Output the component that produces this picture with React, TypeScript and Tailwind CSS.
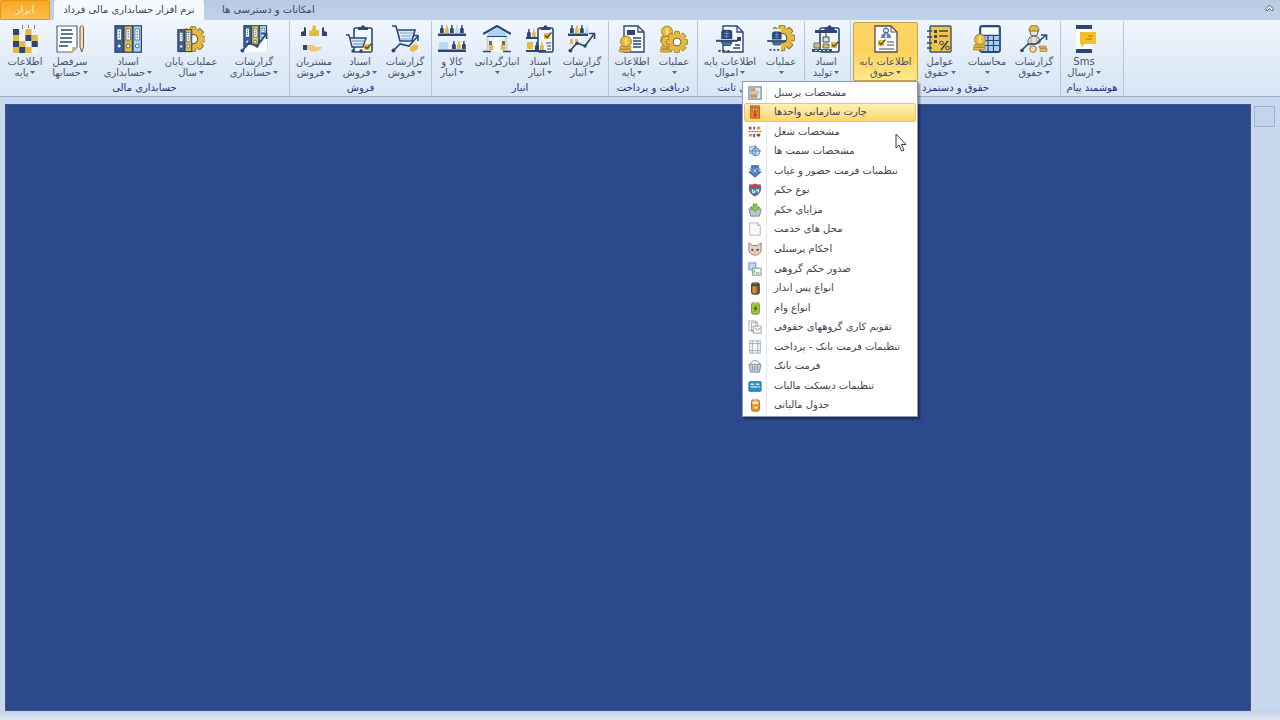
import React from "react";
import clsx from "clsx";

const NAVY = "#2b4676";
const GOLD = "#e6b93f";
const SKY = "#a9d4f2";
const PALE = "#dcebf8";

/* ---------- shared pieces of the 28x28 ribbon icons ---------- */

const Icon: React.FC<{ children: React.ReactNode }> = ({ children }) => (
  <svg width="28" height="28" viewBox="0 0 28 28" fill="none" className="shrink-0" aria-hidden="true">
    {children}
  </svg>
);

const Gear = ({ x = 14, y = 14, s = 1, hole = "#fff" }) => (
  <g transform={`translate(${x} ${y}) scale(${s})`}>
    {[0, 45, 90, 135].map((a) => (
      <rect key={a} x="-3" y="-13" width="6" height="26" rx="1" fill={GOLD} stroke="#8a6d2c" strokeWidth="1" transform={`rotate(${a})`} />
    ))}
    <circle r="10" fill={GOLD} />
    <circle r="4.8" fill={hole} stroke="#6b5a3a" strokeWidth="1.2" />
  </g>
);

const Binders = ({ n = 3 }) => (
  <g>
    {[0, 1, 2].slice(0, n).map((i) => (
      <g key={i}>
        <rect x={1 + i * 9} y="0.8" width="8.4" height="26.4" fill={i === 0 ? "#41608f" : i === 1 ? GOLD : SKY} stroke={NAVY} strokeWidth="1.3" />
        <rect x={3 + i * 9} y="4" width="4.4" height="11" fill="#f4f8fc" stroke={NAVY} strokeWidth="0.6" />
        <path d={`M${5.2 + i * 9} 6v7`} stroke={NAVY} strokeDasharray="1.4 1.2" />
        <circle cx={5.2 + i * 9} cy="21" r="1.9" fill="#fff" stroke={NAVY} strokeWidth="0.8" />
      </g>
    ))}
  </g>
);

const Trend = () => (
  <g>
    <path d="M2 26 9 18l8 3L26 9" stroke={NAVY} strokeWidth="1.6" />
    <path d="M21 8.5h5.6V14" stroke={NAVY} strokeWidth="1.6" />
    <circle cx="2.4" cy="25.6" r="1.9" fill={NAVY} />
    <circle cx="9" cy="18.3" r="1.7" fill={NAVY} />
    <circle cx="17" cy="21" r="1.7" fill={NAVY} />
  </g>
);

const Bottles = ({ x = 0, y = 0, n = 5 }) => (
  <g transform={`translate(${x} ${y})`}>
    {[NAVY, GOLD, NAVY, "#c3d8ec", NAVY].slice(0, n).map((c, i) => (
      <path key={i} d={`M${1 + i * 5} 8V4l1.2-1.6V0h1.4v2.4L${4.8 + i * 5} 4v4z`} fill={c} />
    ))}
  </g>
);

const Clipboard = ({ x = 8, w = 19 }) => (
  <g>
    <rect x={x} y="3" width={w} height="24" rx="1.5" fill="#f3f8fd" stroke={NAVY} strokeWidth="1.6" />
    <path d={`M${x + w / 2 - 5} 5V2.2h3a2 2 0 0 1 4 0h3V5z`} fill={NAVY} />
  </g>
);

const Tick = ({ x = 18, y = 14 }) => (
  <g transform={`translate(${x} ${y})`}>
    <rect width="6" height="6" fill={GOLD} />
    <path d="m1 2.5 2 2L7.5-.5" stroke="#5a4a26" strokeWidth="1.3" />
  </g>
);

const Sheet = ({ x = 5 }) => (
  <g>
    <path d={`M${x} 1h14l6 6v20H${x}z`} fill="#f8fbfe" stroke={NAVY} strokeWidth="1.4" />
    <path d={`M${x + 14} 1v6h6`} stroke={NAVY} strokeWidth="1.3" />
  </g>
);

const Coins = ({ x = 1, y = 16 }) => (
  <g transform={`translate(${x} ${y})`} fill={GOLD} stroke="#9a7628" strokeWidth="0.8">
    <rect y="8" width="12" height="3" rx="1.5" />
    <rect x="1" y="5" width="11" height="3" rx="1.5" />
    <circle cx="7" cy="0.5" r="5.5" />
    <path d="M8.5-1.5c-3-1-3.5 1.6-1.5 2s2 2.6-1.5 1.7M7-3v7" stroke="#fff0b8" fill="none" />
  </g>
);

// hard hat over a crossbar, with three dots below
const Helmet = () => (
  <g>
    <path d="M10 13V6q0-3 3-3h6q3 0 3 3v7z" fill={NAVY} />
    <path d="M13 7h6M13 10h6M16 4v8" stroke="#7ea6d4" strokeWidth="0.8" />
    <path d="M4 15h24" stroke={NAVY} strokeWidth="2.2" />
    <path d="M10 16h12l-2 4h-8z" fill="#49719f" stroke={NAVY} />
    <path d="M7 26h14" stroke={NAVY} strokeWidth="2.2" strokeDasharray="2.4 2.4" />
  </g>
);

const checker: [number, number, string][] = [
  [0, 0, NAVY], [2, 0, GOLD],
  [0, 1, GOLD], [2, 1, NAVY], [3, 1, GOLD],
  [0, 2, NAVY], [1, 2, GOLD], [3, 2, NAVY],
  [0, 3, GOLD], [1, 3, NAVY], [2, 3, GOLD],
];

const icons: Record<string, React.ReactNode> = {
  base: (
    <>
      <rect x="2" y="4" width="25" height="24" fill="#f1f4f6" />
      {checker.map(([col, row, color], i) => (
        <rect key={i} x={2 + col * 6.2} y={4 + row * 6} width="6.2" height="6" fill={color} />
      ))}
      <path d="M11.500 0v4M17.500 0v3M23.500 0v4" stroke="#76869f" />
    </>
  ),
  ledger: (
    <>
      <path d="M1 1h20v21l-5 5H1z" fill="#fdfefe" stroke="#5a677e" strokeWidth="1.2" />
      <path d="M5 5h11M5 9h12M4 13h12M4 17h12M3 21h9" stroke={NAVY} strokeWidth="1.5" />
      <path d="M16 27v-5h5z" fill={GOLD} />
      <path d="M24 3c0-3 3.500-3 3.500 0v19l-1.700 5-1.800-5z" fill="#f5dfb6" stroke="#6f5a49" />
    </>
  ),
  binders: <Binders />,
  yearEnd: (
    <>
      <Gear x={16} y={14} s={0.95} />
      <rect x="0" y="4" width="15" height="23" fill="#e7f0fa" />
      <g transform="translate(0 4) scale(.8 .83)">
        <Binders n={2} />
      </g>
    </>
  ),
  bindersReport: (
    <>
      <g transform="translate(3 0) scale(.86 .8)">
        <Binders />
      </g>
      <path d="m2 27 7-8 8 3 10-11v16z" fill="#f8fbfe" />
      <Trend />
    </>
  ),
  customers: (
    <>
      <path d="M1 11V7l3-1V2l2 1v8zM22 11V3l2-1v4l3 1v4z" fill={NAVY} />
      <path d="M9 11V6l3-1 1-5 3 1v4h3v6z" fill={GOLD} />
      <path d="M3 20h4v5H3z" fill={NAVY} />
      <path d="M7 20q7-1 8 2h7q-3 6-12 4l-3-2z" fill="#f0c680" />
    </>
  ),
  salesDocs: (
    <>
      <Clipboard x={8} w={18} />
      <path d="M0 10h3l3 12h11l3-9H4" fill={PALE} stroke={NAVY} strokeWidth="1.4" />
      <path d="M6 16h12M7 19h10" stroke="#5f8abb" />
      <circle cx="7" cy="26" r="1.7" fill={NAVY} />
      <circle cx="15" cy="26" r="1.7" fill={NAVY} />
      <Tick x={18} y={19} />
    </>
  ),
  salesReport: (
    <>
      <path d="M1 1h4l4 15h12L24 5H7" stroke={NAVY} strokeWidth="1.6" fill={PALE} />
      <path d="M9 8h13M10 11h11M10 14h11" stroke="#7fa6cf" strokeWidth="1.2" />
      <path d="m2 26 7-7 9 2 9-10" stroke={NAVY} strokeWidth="1.6" />
      <path d="M22 10.500h5V16" stroke={NAVY} strokeWidth="1.500" />
      <circle cx="2.500" cy="25.500" r="2" fill={NAVY} />
      <ellipse cx="23" cy="23" rx="4.500" ry="3" fill={GOLD} transform="rotate(-30 23 23)" />
    </>
  ),
  goods: (
    <>
      <Bottles x={1} />
      <path d="M0 8.500h28v2.500H0zM0 24.500h28V27H0z" fill={NAVY} />
      <rect x="1" y="17" width="9" height="7" fill="#b9dcf3" />
      <Bottles x={13} y={16} n={3} />
    </>
  ),
  warehouse: (
    <>
      <path d="M5 8 14 3l9 5v4H5z" fill={SKY} />
      <path d="M0 9 14 1l14 8" stroke={NAVY} strokeWidth="2.200" />
      <path d="M4 11.500h20" stroke={NAVY} />
      <path d="M4.500 12v14M23.500 12v14" stroke="#c6d2e0" strokeWidth="2" />
      <path d="M0 26.500h8M20 26.500h8" stroke={NAVY} strokeWidth="1.500" />
      <path d="M6 16h3v4H6zM19 16h3v4h-3z" fill="#6b6a58" />
      <path d="M6 20h4v5H6zM18 20h4v5h-4z" fill={GOLD} />
      <path d="M11 13h6v13h-6z" fill="#fdfdfd" />
    </>
  ),
  stockDocs: (
    <>
      <Clipboard x={12} w={15} />
      <Bottles x={0} y={4} n={2} />
      <path d="M0 12h12v2H0zM0 25h20v2H0z" fill={NAVY} />
      <rect x="1" y="17" width="6" height="7" fill={GOLD} />
      <Bottles x={8} y={17} n={2} />
      <Tick x={18} y={8} />
      <path d="M20 18h5M21 21h4M21 24h4" stroke={NAVY} />
    </>
  ),
  stockReport: (
    <>
      <Bottles x={1} n={4} />
      <path d="M0 8.500h20V11H0z" fill={NAVY} />
      <path d="M2 14h3v5H2zM7 14h3v3H7z" fill={GOLD} />
      <Trend />
    </>
  ),
  receiptBase: (
    <>
      <Sheet x={6} />
      <path d="M9 5h8v5H9z" fill={NAVY} />
      <path d="M15 13h8M15 16h8M15 19h8M15 22h8" stroke={NAVY} strokeWidth="1.400" />
      <Coins x={1} y={16} />
    </>
  ),
  coinsGear: (
    <>
      <Coins x={0} y={6} />
      <Coins x={0} y={16} />
      <Gear x={17} y={17} s={0.82} />
    </>
  ),
  assetBase: (
    <>
      <Sheet x={7} />
      <path d="M21 12h4v4h-4z" fill={NAVY} />
      <path d="M19 20h5M17 23h7" stroke={NAVY} strokeWidth="1.400" />
      <path d="M5 5h14v15H5z" fill="#f4f8fc" />
      <g transform="translate(-4 2) scale(.92)">
        <Helmet />
      </g>
    </>
  ),
  assetOps: (
    <>
      <Gear x={15} y={13} s={0.98} />
      <path d="M0 4h14v24H0z" fill="#e7f0fa" />
      <g transform="translate(-3 4) scale(.8)">
        <Helmet />
      </g>
    </>
  ),
  production: (
    <>
      <Clipboard x={8} w={19} />
      <path d="M3 5h22v3H3z" fill={NAVY} />
      <path d="M14 8v4M11 12h6v5h-6z" stroke={NAVY} fill="#f4e2b8" />
      <path d="M2 18h6v5H2zM11 19h6v4h-6z" fill="#d9b978" stroke="#5a5440" strokeWidth="0.8" />
      <path d="M0 24h20v3H0z" fill="#3a5a62" />
      <path d="M3 25.500h14" stroke="#c8d9ea" strokeDasharray="2 2" />
      <Tick x={19} y={17} />
    </>
  ),
  payrollBase: (
    <>
      <path d="M3 1h16l6 6v20H3z" fill="#fffdf6" stroke="#4b4f5c" strokeWidth="1.300" />
      <path d="M19 1v6h6" stroke="#4b4f5c" />
      <circle cx="14" cy="5.500" r="2.500" fill={PALE} stroke={NAVY} />
      <path d="M9 13q0-5 5-5t5 5z" fill="#6485b0" />
      <path d="m14 8-1 4 1 1 1-1z" fill="#fff" />
      <Tick x={6} y={15} />
      <path d="M15 17h7M15 20h7M7 24h15" stroke="#4b4f5c" strokeWidth="1.200" />
    </>
  ),
  factors: (
    <>
      <rect x="4" y="1" width="21" height="26" rx="1" fill="#efc64d" stroke="#4a5064" strokeWidth="1.400" />
      <path d="M1 6h5M1 12h5M1 18h5M1 23h5" stroke={NAVY} strokeWidth="1.600" />
      <path d="M13 6h9M13 11h9" stroke="#4a4a48" strokeWidth="1.400" />
      <path d="M8 5h3v3H8zM8 10h3v3H8zM8 15h3v3H8z" fill="#4a4a48" />
      <path d="m22 16-7 9" stroke="#3a3f4e" strokeWidth="1.600" />
      <circle cx="15.500" cy="18" r="1.800" stroke="#3a3f4e" />
      <circle cx="21.500" cy="23" r="1.800" stroke="#3a3f4e" />
    </>
  ),
  calculator: (
    <>
      <rect x="7" y="1" width="20" height="26" rx="2" fill="#a9cdf0" stroke={NAVY} strokeWidth="1.800" />
      <rect x="9" y="3" width="16" height="6" fill="#fff" />
      <path d="M8 10.500h18M8 15.500h18M8 20.500h18M15 10v16M20.500 10v16" stroke={NAVY} strokeWidth="1.200" />
      <Coins x={0} y={14} />
    </>
  ),
  payrollReport: (
    <>
      <circle cx="14" cy="7" r="4" fill="#fbe3bf" stroke={NAVY} strokeWidth="0.8" />
      <path d="M9 6q0-6 5-6t5 6z" fill={GOLD} stroke="#6b5a3a" strokeWidth="0.8" />
      <path d="M8 20v-5q1-4 6-4t6 4v3z" fill="#cfe3f6" stroke={NAVY} strokeWidth="0.8" />
      <path d="M11 12v7M17 12v7" stroke={GOLD} strokeWidth="1.500" />
      <path d="m1 26 7-7h8L26 10M21 10h5.500v5" stroke={NAVY} strokeWidth="1.600" />
      <circle cx="2" cy="25.500" r="1.800" fill={NAVY} />
      <circle cx="13" cy="24" r="3.300" fill="#f6d998" stroke="#9a7628" />
      <path d="M19 21h7v2h-7zM20 23.500h7v3h-7z" fill={GOLD} stroke="#9a7628" strokeWidth="0.6" />
    </>
  ),
  sms: (
    <>
      <rect x="6" y="1" width="16" height="26" rx="1" fill="#fff" />
      <path d="M6 0h16v4H6zM6 24h16v4H6z" fill={NAVY} />
      <path d="M10 7h16v12H15l-4 3v-3h-1z" fill="#f3bf2c" />
      <path d="M18 11h5M16 14h6" stroke="#c78f14" strokeWidth="1.300" />
    </>
  ),
};

/* ---------- 16x16 menu icons ---------- */

const menuIcons: Record<string, React.ReactNode> = {
  person: (
    <>
      <rect x="1" y="1" width="14" height="14" fill="#dceaf5" stroke="#6f8294" strokeWidth="1.3" />
      <path d="M3 3h5v2H3zM3 10h7v3H3z" fill="#dd9a4a" stroke="#81756a" strokeWidth=".5" />
      <path d="M3 6h9v3H3z" fill="#f0c886" stroke="#81939d" strokeWidth=".5" />
    </>
  ),
  chart: (
    <>
      <rect x="3" y="1" width="10" height="14" fill="#ee8038" stroke="#c04c16" />
      <path d="M5 3h2v4H5zM9 3h2v4H9z" fill="#ffe2a6" stroke="#8a2806" strokeWidth=".6" />
      <path d="M8 7v6M6 11l2 2 2-2" stroke="#8a2806" />
    </>
  ),
  job: (
    <>
      <path d="M1 2h3v3H1zM6 2h2v3H6zM10 10h4v3h-4z" fill="#b1413f" />
      <path d="M10 2h4v3h-4zM1 10h4v3H1z" fill="#d9a138" />
      <path d="M1 7.500h14" stroke="#444" strokeDasharray="2 1" />
      <path d="M6 10h2v4H6z" fill="#6a5280" />
    </>
  ),
  position: (
    <>
      <path d="M2 3h8v8H2z" fill="#cfe2f5" stroke="#6a98c8" />
      <circle cx="9" cy="9" r="4.500" fill="#b9d5f0" fillOpacity=".7" stroke="#4d7fb8" />
      <path d="M8 1v13M1 8h14" stroke="#4d7fb8" />
    </>
  ),
  attendance: (
    <>
      <path d="m8 15-7-6h3V2h8v7h3z" fill="#4b7fc2" stroke="#315c9b" />
      <path d="m1 6 3-3v6zM15 6l-3-3v6z" fill="#8eb8e4" />
      <path d="m6 6 4 4M10 5 6 10" stroke="#dcebfb" />
    </>
  ),
  shield: (
    <>
      <path d="M2 2q3 1 6-1 3 2 6 1 3 9-6 13Q-1 11 2 2z" fill="#3d7cab" stroke="#7b6a78" />
      <path d="M2 2q3 1 6-1 3 2 6 1l.5 3h-13z" fill="#cf4038" />
      <path d="M5 7v4h3V9H5M10 7v2h2M12 7v4" stroke="#fff" />
    </>
  ),
  benefits: (
    <>
      <path d="M1 7h14l-2 8H3z" fill="#b8c7d2" stroke="#72818d" />
      <path d="m2 7 3-4M14 7l-3-4" stroke="#72818d" />
      <path d="M6 1h4v4h3L8 10 3 5h3z" fill="#8dc63f" stroke="#4e8a20" strokeWidth=".7" />
    </>
  ),
  page: <path d="M2 1h9l3 3v11H2zM11 1v3h3" fill="#fafafa" stroke="#b0b0b0" />,
  cat: (
    <>
      <path d="M1 1l4 3h6l4-3v9q-2 5-7 5t-7-5z" fill="#e6d2c4" stroke="#8e7364" />
      <circle cx="5" cy="9" r="1.3" fill="#57443b" />
      <circle cx="11" cy="9" r="1.3" fill="#57443b" />
      <path d="M7 11h2l-1 1z" fill="#b3564f" />
    </>
  ),
  group: (
    <>
      <path d="M1 1h8v8H1z" fill="#b9d8f2" stroke="#5d89b5" />
      <path d="M5 7h10v8H5z" fill="#f1f6ee" stroke="#6d8c86" />
      <path d="M7 9v4M9 12.500h4" stroke="#4f8a5c" />
    </>
  ),
  saving: (
    <>
      <rect x="4" y="2" width="9" height="13" rx="2" fill="#4f4a45" stroke="#4a4038" />
      <path d="M6 1h5v2H6z" fill="#9b948a" />
      <path d="M5 6h4v8H5z" fill="#e58a2a" />
      <path d="M9 6h2v8H9z" fill="#b56a24" />
    </>
  ),
  loan: (
    <>
      <rect x="4" y="2" width="9" height="13" rx="2" fill="#a2c83a" stroke="#71862f" />
      <path d="M6 1h5v2H6z" fill="#c5c9b3" />
      <path d="M9 5 6 9h2l-1 4 4-5H9l1-3z" fill="#48661b" />
    </>
  ),
  calendar: (
    <>
      <path d="M1 1h8v11H1zM4 3h7v10H4z" fill="#f7f8fa" stroke="#a0a6ae" />
      <path d="M6 7h9v8H6z" fill="#fff" stroke="#8b929c" />
      <path d="m8 9 3 3 3-3" stroke="#777" />
    </>
  ),
  grid: (
    <>
      <rect x="2" y="1" width="12" height="14" fill="#f5f9fb" stroke="#9aabb6" />
      <path d="M5 1v14M11 1v14M2 4h12M2 12h12" stroke="#9aabb6" />
    </>
  ),
  basket: (
    <>
      <path d="M1 6h14l-2 9H3z" fill="#c6d0dc" stroke="#76869a" />
      <path d="M3 6q0-4 5-4t5 4M5 8v5M8 8v5M11 8v5" stroke="#76869a" />
    </>
  ),
  disk: (
    <>
      <rect x="1" y="3" width="14" height="11" rx="1" fill="#2a92c9" stroke="#1c6c9b" />
      <path d="M3 6h4M3 9h8M9 6h4M12 9h2" stroke="#c9ecfb" strokeWidth="1.5" />
    </>
  ),
  taxTable: (
    <>
      <rect x="4" y="2" width="9" height="13" rx="2" fill="#f0932a" stroke="#a8601a" />
      <path d="M6 1h5v2H6z" fill="#c3c0b6" />
      <path d="M5 4h7v3H5z" fill="#f8e7c8" />
      <path d="M7 10h4v2H7z" fill="#fff3da" />
    </>
  ),
};

const menuItems = [
  { icon: "person", label: "مشخصات پرسنل" },
  { icon: "chart", label: "چارت سازمانی واحدها", active: true },
  { icon: "job", label: "مشخصات شغل" },
  { icon: "position", label: "مشخصات سمت ها" },
  { icon: "attendance", label: "تنظمیات فرمت حضور و غیاب" },
  { icon: "shield", label: "نوع حکم" },
  { icon: "benefits", label: "مزایای حکم" },
  { icon: "page", label: "محل های خدمت" },
  { icon: "cat", label: "احکام پرسنلی" },
  { icon: "group", label: "صدور حکم گروهی" },
  { icon: "saving", label: "انواع پس انداز" },
  { icon: "loan", label: "انواع وام" },
  { icon: "calendar", label: "تقویم کاری گروههای حقوقی" },
  { icon: "grid", label: "تنظیمات فرمت بانک - پرداخت" },
  { icon: "basket", label: "فرمت بانک" },
  { icon: "disk", label: "تنظیمات دیسکت مالیات" },
  { icon: "taxTable", label: "جدول مالیاتی" },
];

interface RibbonItem {
  icon: string;
  top: string;
  bottom?: string;
  width: string;
  open?: boolean;
}

interface RibbonGroup {
  title?: string;
  pad: string;
  items: RibbonItem[];
}

const groups: RibbonGroup[] = [
  {
    title: "حسابداری مالی",
    pad: "pl-[3px]",
    items: [
      { icon: "base", top: "اطلاعات", bottom: "پایه", width: "w-[44px]" },
      { icon: "ledger", top: "سرفصل", bottom: "حسابها", width: "w-[46px]" },
      { icon: "binders", top: "اسناد", bottom: "حسابداری", width: "w-[70px]" },
      { icon: "yearEnd", top: "عملیات پایان", bottom: "سال", width: "w-[56px]" },
      { icon: "bindersReport", top: "گزارشات", bottom: "حسابداری", width: "w-[70px]" },
    ],
  },
  {
    title: "فروش",
    pad: "pl-px pr-1",
    items: [
      { icon: "customers", top: "مشتریان", bottom: "فروش", width: "w-[46px]" },
      { icon: "salesDocs", top: "اسناد", bottom: "فروش", width: "w-[46px]" },
      { icon: "salesReport", top: "گزارشات", bottom: "فروش", width: "w-[44px]" },
    ],
  },
  {
    title: "انبار",
    pad: "pl-px pr-px",
    items: [
      { icon: "goods", top: "کالا و", bottom: "انبار", width: "w-[38px]" },
      { icon: "warehouse", top: "انبارگردانی", width: "w-[52px]" },
      { icon: "stockDocs", top: "اسناد", bottom: "انبار", width: "w-[34px]" },
      { icon: "stockReport", top: "گزارشات", bottom: "انبار", width: "w-[50px]" },
    ],
  },
  {
    title: "دریافت و پرداخت",
    pad: "pr-1",
    items: [
      { icon: "receiptBase", top: "اطلاعات", bottom: "پایه", width: "w-[46px]" },
      { icon: "coinsGear", top: "عملیات", width: "w-[38px]" },
    ],
  },
  {
    title: "دارایی های ثابت",
    pad: "pl-[2px] pr-[2px]",
    items: [
      { icon: "assetBase", top: "اطلاعات پایه", bottom: "اموال", width: "w-[60px]" },
      { icon: "assetOps", top: "عملیات", width: "w-[42px]" },
    ],
  },
  {
    pad: "pl-px pr-1",
    items: [{ icon: "production", top: "اسناد", bottom: "تولید", width: "w-[40px]" }],
  },
  {
    title: "حقوق و دستمزد",
    pad: "pl-[2px] pr-1",
    items: [
      { icon: "payrollBase", top: "اطلاعات پایه", bottom: "حقوق", width: "w-[65px]", open: true },
      { icon: "factors", top: "عوامل", bottom: "حقوق", width: "w-[44px]" },
      { icon: "calculator", top: "محاسبات", width: "w-[50px]" },
      { icon: "payrollReport", top: "گزارشات", bottom: "حقوق", width: "w-[44px]" },
    ],
  },
  {
    title: "هوشمند پیام",
    pad: "pl-[3px] pr-[19px]",
    items: [{ icon: "sms", top: "Sms", bottom: "ارسال", width: "w-[40px]" }],
  },
];

const Caret = () => (
  <svg width="5" height="3" viewBox="0 0 5 3" className="shrink-0" aria-hidden="true">
    <path d="M0 0h5L2.500 3z" fill="#5b6579" />
  </svg>
);

const DropMenu = () => (
  <div
    role="menu"
    className="absolute top-full right-0 z-10 grid h-[336px] w-[176px] auto-rows-fr border border-[#8e9bb2] bg-white p-px shadow-[2px_2px_2px_rgba(0,0,0,0.4)]"
  >
    {menuItems.map(({ icon, label, active }) => (
      <button
        key={label}
        role="menuitem"
        className={clsx(
          "flex items-center rounded-xs border pl-[3px] text-[10px] leading-none whitespace-nowrap text-[#3f4250]",
          active ? "border-[#e8c66a] bg-linear-to-b from-[#fdf0b8] to-[#fbd866]" : "border-transparent"
        )}
      >
        <svg width="14" height="14" viewBox="0 0 16 16" fill="none" className="shrink-0" aria-hidden="true">
          {menuIcons[icon]}
        </svg>
        <span className={clsx("ml-1 h-5 border-l", active ? "border-transparent" : "border-[#e4e7ec]")} />
        <span dir="rtl" className="ml-[7px]">{label}</span>
      </button>
    ))}
    <svg width="12" height="19" viewBox="0 0 12 19" className="absolute top-[51px] right-[10px]" aria-hidden="true">
      <path d="M1 1v14l3-3 2.500 6 2.500-1-2.500-5.500H11z" fill="#fff" stroke="#333b48" />
    </svg>
  </div>
);

const RibbonButton: React.FC<RibbonItem> = ({ icon, top, bottom, width, open }) => (
  <div className={clsx("relative shrink-0", width)}>
    <button
      aria-haspopup="menu"
      aria-expanded={!!open}
      className={clsx(
        "flex h-[59px] w-full flex-col items-center rounded-xs border pt-[2px] text-[10px] leading-[11px] whitespace-nowrap text-[#48536b]",
        open ? "border-[#c8a24a] bg-linear-to-b from-[#fbd568] via-[#fcd25a] to-[#fee88c]" : "border-transparent"
      )}
    >
      <Icon>{icons[icon]}</Icon>
      <span dir="auto" className="mt-[3px]">{top}</span>
      <span className="flex h-[11px] items-center gap-[2px]">
        {bottom && <span dir="rtl">{bottom}</span>}
        <Caret />
      </span>
    </button>
    {open && <DropMenu />}
  </div>
);

const App = () => {
  return (
    <div className="flex min-h-screen flex-col bg-[#c8d8ee] font-['DejaVu_Sans',sans-serif] text-[10px]">
      <nav className="flex h-5 items-stretch bg-linear-to-b from-[#b9cae4] to-[#c0d1e9] leading-none text-[#3c4660]">
        <button className="w-[50px] rounded-t-xs border border-[#e09a20] bg-linear-to-b from-[#f9a51c] to-[#fdc04a] text-[#fff0c8]">ابزار</button>
        <button className="ml-1 w-[150px] rounded-t-xs bg-[#f4f9fe] whitespace-nowrap">
          <span dir="rtl">نرم افزار حسابداری مالی فرداد</span>
        </button>
        <button className="ml-[14px] px-1 whitespace-nowrap">
          <span dir="rtl">امکانات و دسترسی ها</span>
        </button>
        <button aria-label="Collapse ribbon" className="mt-1 mr-[6px] ml-auto flex h-2">
          <svg width="9" height="8" viewBox="0 0 9 8" fill="#fff" stroke="#566273" aria-hidden="true">
            <path d="M4.500 1 8 4.500v2H6.500l-2-2-2 2H1v-2z" />
          </svg>
        </button>
      </nav>

      <header className="flex h-[77px] border-t border-b border-t-[#e9f1fa] border-b-[#9aabc4] bg-linear-to-b from-[#f0f6fd] via-[#e2ecf8] to-[#d8e5f5]">
        {groups.map(({ title, pad, items }) => (
          <section key={items[0].icon} className="flex shrink-0 flex-col border-r border-[#b5c5db] pt-px">
            <div className={clsx("flex", pad)}>
              {items.map((item) => (
                <RibbonButton key={item.icon} {...item} />
              ))}
            </div>
            {title && (
              <h2 dir="rtl" className="mt-px text-center text-[10px] leading-3 whitespace-nowrap text-[#26307c]">
                {title}
              </h2>
            )}
          </section>
        ))}
      </header>

      <main className="flex flex-1 bg-[#c8d8ef] pt-[7px] pl-[5px]">
        <div className="flex-1 border border-[#3d5485] bg-[#2c498b]" />
        <aside className="w-[29px] pt-[2px] pl-[3px]">
          <div className="h-[21px] w-[21px] border border-[#9fb2d0] bg-[#c4d4ec]" />
        </aside>
      </main>
      <footer className="h-[9px] bg-linear-to-b from-[#c3d1e6] to-[#dfe8f4]" />
    </div>
  );
};

export default App;
